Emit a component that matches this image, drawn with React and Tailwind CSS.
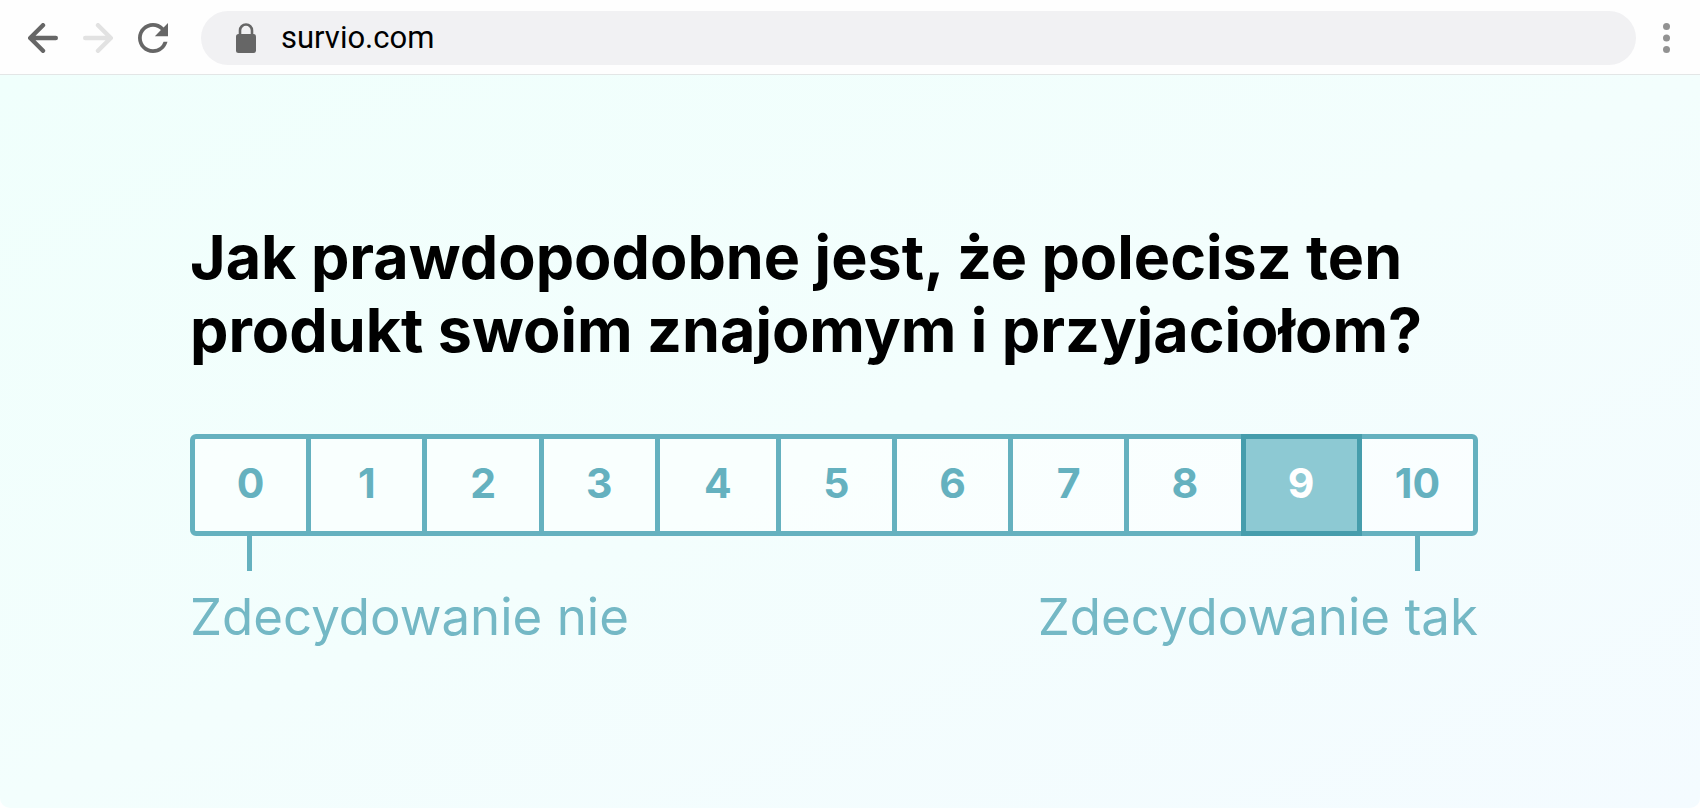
import { useState } from 'react';

const scores = [
  { value: 0, className: 'grow-[121] rounded-l-md' },
  { value: 1, className: 'grow-[121]' },
  { value: 2, className: 'grow-[121]' },
  { value: 3, className: 'grow-[121]' },
  { value: 4, className: 'grow-[126]' },
  { value: 5, className: 'grow-[121]' },
  { value: 6, className: 'grow-[121]' },
  { value: 7, className: 'grow-[121]' },
  { value: 8, className: 'grow-[121]' },
  { value: 9, className: 'grow-[121]' },
  { value: 10, className: 'grow-[121] rounded-r-md' }
];

function BrowserBar() {
  return (
    <header className="flex h-[75px] items-center border-b border-[#e3e6e6] bg-[#fefefe] pl-7 pr-[30px] pt-0.5">
      <nav className="flex items-center gap-[25px]">
        <button type="button" aria-label="Wstecz" className="text-[#666666]">
          <svg className="size-[30px]" viewBox="0 0 30 30" fill="none" stroke="currentColor" strokeWidth="4.4" strokeLinecap="round" strokeLinejoin="round">
            <path d="M27.8 15H3M15 2.2 2.2 15 15 27.8" />
          </svg>
        </button>
        <button type="button" aria-label="Dalej" className="text-[#e2e2e2]">
          <svg className="size-[30px]" viewBox="0 0 30 30" fill="none" stroke="currentColor" strokeWidth="4.4" strokeLinecap="round" strokeLinejoin="round">
            <path d="M2.2 15H27M15 2.2 27.8 15 15 27.8" />
          </svg>
        </button>
        <button type="button" aria-label="Odśwież" className="text-[#666666]">
          <svg className="size-[30px]" viewBox="4 4 16 16" fill="currentColor">
            <path d="M17.65 6.35A7.96 7.96 0 0 0 12 4c-4.42 0-7.99 3.58-7.99 8s3.57 8 7.99 8c3.73 0 6.84-2.55 7.73-6h-2.08A5.99 5.99 0 0 1 12 18c-3.31 0-6-2.69-6-6s2.69-6 6-6c1.66 0 3.14.69 4.22 1.78L13 11h7V4l-2.35 2.35z" />
          </svg>
        </button>
      </nav>

      {/* Pasek adresu */}
      <div className="ml-[33px] mr-[27px] flex h-[54px] flex-1 items-center gap-[25px] rounded-full bg-[#f1f1f3] pl-[35px] pr-8">
        <svg className="h-[30px] w-5 text-[#666666]" viewBox="0 0 20 30">
          <path d="M4 13V7.5a6 6 0 0 1 12 0V13" fill="none" stroke="currentColor" strokeWidth="2.6" />
          <rect y="11" width="20" height="19" rx="2.5" fill="currentColor" />
        </svg>
        <input
          type="text"
          aria-label="Adres strony"
          defaultValue="survio.com"
          className="h-10 min-w-0 flex-1 bg-transparent font-[Roboto,sans-serif] text-[31px] text-black outline-none"
        />
      </div>

      <button type="button" aria-label="Menu" className="text-[#929292]">
        <svg className="h-[30px] w-[7px]" viewBox="0 0 7 30" fill="currentColor">
          <circle cx="3.5" cy="3.5" r="3.5" />
          <circle cx="3.5" cy="15" r="3.5" />
          <circle cx="3.5" cy="26.5" r="3.5" />
        </svg>
      </button>
    </header>
  );
}

function ScoreScale() {
  const [selected, setSelected] = useState(9);

  return (
    <div role="radiogroup" aria-labelledby="question" className="mt-[67px] flex pl-[5px]">
      {scores.map(({ value, className }) => {
        const active = value === selected;

        return (
          <label
            key={value}
            className={`relative -ml-[5px] flex h-[102px] basis-0 cursor-pointer items-center justify-center border-[5px] pb-[3px] text-[41px] font-bold ${className} ${
              active ? 'z-10 border-[#469dac] bg-[#8dc9d3] text-white' : 'border-[#65b1bf] bg-white/50 text-[#65b1bf]'
            }`}
          >
            <input
              type="radio"
              name="score"
              value={value}
              checked={active}
              onChange={() => setSelected(value)}
              className="sr-only"
            />
            {value}
          </label>
        );
      })}
    </div>
  );
}

export default function App() {
  return (
    <div className="flex min-h-screen flex-col bg-white font-[Inter,sans-serif]">
      <BrowserBar />
      <main className="flex-1 rounded-b-[10px] bg-linear-to-br from-[#f0fffc] via-[#f3fefd] to-[#f4fbff] pb-[148px] pl-[190px] pr-[222px] pt-[146px]">
        <h1 id="question" className="text-[61px] font-bold leading-[73px] text-black">
          Jak prawdopodobne jest, że polecisz ten produkt swoim znajomym i przyjaciołom?
        </h1>

        <ScoreScale />

        {/* Kreski łączące skrajne oceny z opisami */}
        <div className="flex justify-between pl-[57px] pr-[58px]">
          <span className="h-[35px] w-[5px] bg-[#65b1bf]" />
          <span className="h-[35px] w-[5px] bg-[#65b1bf]" />
        </div>
        <div className="mt-4 flex justify-between text-[51px] font-normal leading-[60px] text-[#74b8c5]">
          <span>Zdecydowanie nie</span>
          <span>Zdecydowanie tak</span>
        </div>
      </main>
    </div>
  );
}
